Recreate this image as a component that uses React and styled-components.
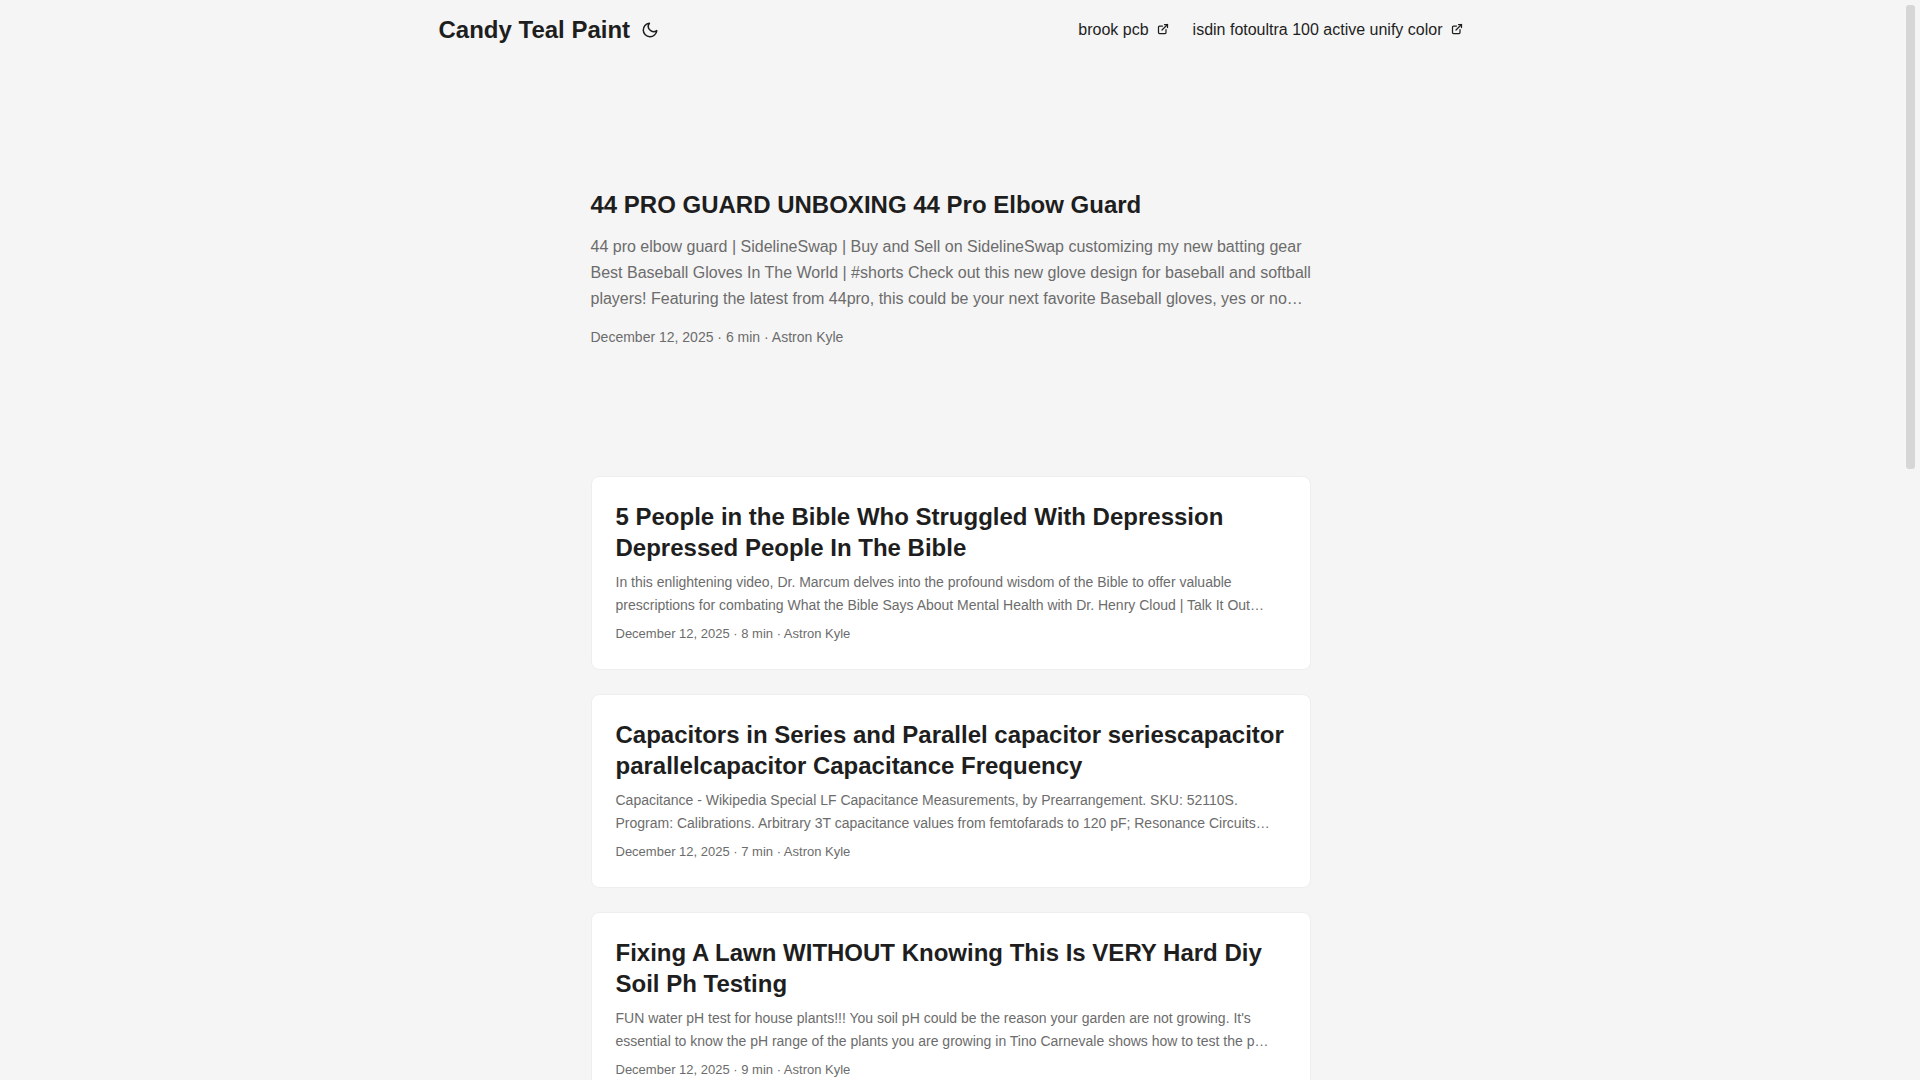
import React from "react";

import styled, { createGlobalStyle } from "styled-components";

const GlobalStyle = createGlobalStyle`
  :root {
    --gap: 24px;
    --content-gap: 14px;
    --nav-width: 1024px;
    --main-width: 720px;
    --header-height: 60px;
    --radius: 8px;
    --entry: rgb(255, 255, 255);
    --primary: rgb(30, 30, 30);
    --secondary: rgb(108, 108, 108);
    --tertiary: rgb(214, 214, 214);
    --border: rgb(238, 238, 238);
    --background: rgb(245, 245, 245);
  }

  * {
    box-sizing: border-box;
    margin: 0;
    padding: 0;
  }

  body {
    font-family: "Liberation Sans", Arial, sans-serif;
    font-size: 18px;
    line-height: 1.6;
    color: var(--primary);
    background: var(--background);
    overflow-wrap: break-word;
  }

  a {
    color: inherit;
    text-decoration: none;
  }
`;

const Page = styled.div`
  display: flex;
  height: 100vh;
`;

const Scroller = styled.div`
  flex: 1;
  min-width: 0;
  overflow-y: auto;
  scrollbar-width: none;
`;

const ScrollTrack = styled.div`
  flex: none;
  width: 19px;
  padding: 5px;
`;

const ScrollThumb = styled.div`
  height: 43vh;
  border-radius: 3px;
  background: var(--tertiary);
`;

const Nav = styled.nav`
  display: flex;
  flex-wrap: wrap;
  justify-content: space-between;
  max-width: calc(var(--nav-width) + var(--gap) * 2);
  margin: 0 auto;
  padding: 0 var(--gap);
  line-height: var(--header-height);
`;

const Logo = styled.div`
  display: flex;
  align-items: center;

  a {
    font-size: 24px;
    font-weight: 700;
  }
`;

const ThemeToggle = styled.button`
  display: flex;
  align-items: center;
  margin: 0 8px;
  border: 0;
  background: none;
  color: inherit;
  cursor: pointer;
`;

const Menu = styled.ul`
  display: flex;
  gap: var(--gap);
  list-style: none;
  font-size: 16px;
  white-space: nowrap;

  svg {
    margin-left: 8px;
  }
`;

const Main = styled.main`
  max-width: calc(var(--main-width) + var(--gap) * 2);
  margin: 0 auto;
  padding: var(--gap);
`;

const Title = styled.h2`
  font-size: 24px;
  line-height: 31px;
`;

const Summary = styled.p`
  color: var(--secondary);
`;

const Meta = styled.footer`
  color: var(--secondary);
  line-height: 22px;
`;

const FirstEntry = styled.article`
  display: flex;
  flex-direction: column;
  justify-content: center;
  min-height: 320px;
  margin: var(--gap) 0 calc(var(--gap) * 2);

  ${Summary} {
    margin: var(--content-gap) -8px var(--content-gap) 0;
    font-size: 16px;
    line-height: 26px;
  }

  ${Meta} {
    font-size: 14px;
  }
`;

const PostEntry = styled.article`
  margin-bottom: var(--gap);
  padding: var(--gap);
  border: 1px solid var(--border);
  border-radius: var(--radius);
  background: var(--entry);

  ${Summary} {
    margin: 8px 0 6px;
    font-size: 14px;
    line-height: 23px;
  }

  ${Meta} {
    font-size: 13px;
  }
`;

const MoonIcon = () => (
  <svg
    width="24"
    height="18"
    viewBox="0 0 24 24"
    fill="none"
    stroke="currentColor"
    strokeWidth="2"
    strokeLinecap="round"
    strokeLinejoin="round"
  >
    <path d="M21 12.79A9 9 0 1 1 11.21 3 7 7 0 0 0 21 12.79z" />
  </svg>
);

const ExternalIcon = () => (
  <svg
    width="12"
    height="12"
    viewBox="0 0 24 24"
    fill="none"
    stroke="currentColor"
    strokeWidth="2.5"
    strokeLinecap="round"
    strokeLinejoin="round"
  >
    <path d="M18 13v6a2 2 0 0 1-2 2H5a2 2 0 0 1-2-2V8a2 2 0 0 1 2-2h6" />
    <path d="M15 3h6v6" />
    <path d="M10 14L21 3" />
  </svg>
);

const links = ["brook pcb", "isdin fotoultra 100 active unify color"];

const featured = {
  title: "44 PRO GUARD UNBOXING 44 Pro Elbow Guard",
  summary:
    "44 pro elbow guard | SidelineSwap | Buy and Sell on SidelineSwap customizing my new batting gear Best Baseball Gloves In The World | #shorts Check out this new glove design for baseball and softball players! Featuring the latest from 44pro, this could be your next favorite Baseball gloves, yes or no…",
  minutes: 6,
};

const posts = [
  {
    title:
      "5 People in the Bible Who Struggled With Depression Depressed People In The Bible",
    summary:
      "In this enlightening video, Dr. Marcum delves into the profound wisdom of the Bible to offer valuable prescriptions for combating What the Bible Says About Mental Health with Dr. Henry Cloud | Talk It Out…",
    minutes: 8,
  },
  {
    title:
      "Capacitors in Series and Parallel capacitor seriescapacitor parallelcapacitor Capacitance Frequency",
    summary:
      "Capacitance - Wikipedia Special LF Capacitance Measurements, by Prearrangement. SKU: 52110S. Program: Calibrations. Arbitrary 3T capacitance values from femtofarads to 120 pF; Resonance Circuits…",
    minutes: 7,
  },
  {
    title:
      "Fixing A Lawn WITHOUT Knowing This Is VERY Hard Diy Soil Ph Testing",
    summary:
      "FUN water pH test for house plants!!! You soil pH could be the reason your garden are not growing. It's essential to know the pH range of the plants you are growing in Tino Carnevale shows how to test the p…",
    minutes: 9,
  },
];

const EntryBody = ({ title, summary, minutes }) => (
  <>
    <Title>
      <a href="#">{title}</a>
    </Title>
    <Summary>{summary}</Summary>
    <Meta>December 12, 2025 · {minutes} min · Astron Kyle</Meta>
  </>
);

const App = () => {
  return (
    <Page>
      <GlobalStyle />
      <Scroller>
        <header>
          <Nav>
            <Logo>
              <a href="#">Candy Teal Paint</a>
              <ThemeToggle type="button" aria-label="Toggle theme">
                <MoonIcon />
              </ThemeToggle>
            </Logo>
            <Menu>
              {links.map((label) => (
                <li key={label}>
                  <a href="#">
                    {label}
                    <ExternalIcon />
                  </a>
                </li>
              ))}
            </Menu>
          </Nav>
        </header>
        <Main>
          <FirstEntry>
            <EntryBody {...featured} />
          </FirstEntry>
          {posts.map((post) => (
            <PostEntry key={post.title}>
              <EntryBody {...post} />
            </PostEntry>
          ))}
        </Main>
      </Scroller>
      <ScrollTrack aria-hidden="true">
        <ScrollThumb />
      </ScrollTrack>
    </Page>
  );
};

export default App;
